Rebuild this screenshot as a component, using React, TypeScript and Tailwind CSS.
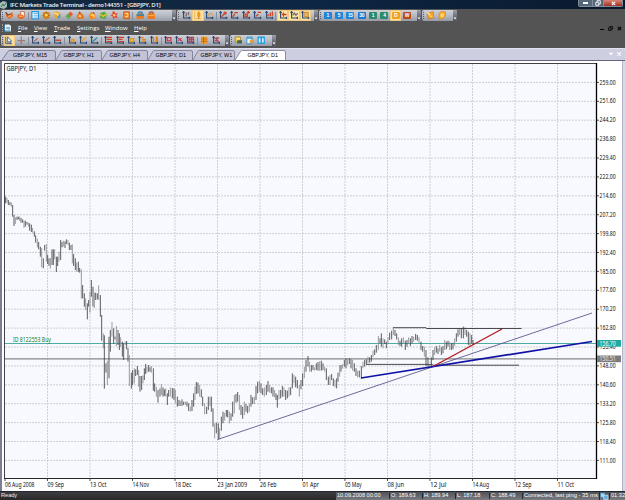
import { Fragment, type ReactNode } from "react";

type Bar = [number, number, number];

// x, high, low in thirds of a pixel
const autumn: Bar[] = [
  [17,20,40],[21,24,38],[25,30,45],[30,36,46],[34,38,50],[38,45,80],[42,75,108],[46,82,102],[51,80,90],[55,80,88],
  [59,80,92],[63,84,98],[68,88,98],[72,92,114],[76,92,110],[81,96,104],[85,98,110],[89,100,122],[94,104,126],[98,114,128],
  [103,124,140],[107,136,158],[112,146,172],[116,156,178],[121,170,200],[125,174,232],[130,205,235],[134,165,182],[139,162,215],
  [143,195,222],[147,205,228],[151,204,236],[156,178,225],[160,178,225],[164,178,208],[169,200,246],[173,200,228],[177,185,215],
  [182,150,210],[186,156,172],[190,152,170],[195,154,174],[199,148,162],[204,150,165],[208,158,180],[213,165,180],[217,163,220],
  [221,192,228],[226,205,240],[230,218,245],[235,215,245],[239,234,248],[244,238,326],[248,285,325],[253,310,350],[257,325,360],
  [262,340,388],[266,330,350],[270,305,368],[274,270,320],[279,290,350],[283,308,354],[287,308,330],[292,310,328],[296,286,330],
  [301,315,380],[305,375,452],[310,430,475],[313,436,596],[318,520,548],[322,512,585],[327,440,565],[331,420,485],[336,396,440],
  [341,415,462],[345,440,448],[349,408,468],[354,420,465],[358,430,480],[362,442,470],[367,455,500],[371,460,510],[376,455,465],
  [380,453,478],[384,475,515],[388,495,588],[394,548,596],[398,540,585],[403,535,580],[407,538,558],[412,528,555],[416,540,590],
  [420,558,605],[425,558,600],[429,556,580],[433,535,570],[437,522,552],[441,530,548],[446,525,545],
];

const winter: Bar[] = [
  [0,202,215],[4,198,218],[10,205,272],[14,250,275],[19,260,290],[24,270,308],[30,265,290],[34,252,285],[39,262,290],[43,268,288],
  [47,265,290],[52,280,315],[56,270,290],[61,262,290],[67,264,295],[72,265,300],[76,270,310],[82,290,320],[87,300,318],[91,303,318],
  [96,298,318],[101,305,315],[106,305,315],[111,305,320],[116,310,333],[121,320,335],[126,300,333],[131,280,320],[135,260,300],
  [139,246,282],[144,248,280],[149,255,290],[154,268,292],[158,290,318],[164,310,343],[170,320,342],[175,290,330],[180,290,318],
  [184,290,335],[189,325,380],[194,370,415],[199,368,400],[205,370,418],[209,385,418],[214,350,392],[219,335,370],[224,338,362],
  [229,330,350],[233,330,352],[238,335,370],[243,340,362],[248,305,350],[253,285,340],[258,282,308],[263,276,305],[268,285,330],
  [273,315,345],[278,320,356],[283,305,345],[288,312,335],[293,318,340],[298,310,335],[303,285,320],[308,292,312],[313,290,312],
  [318,258,300],[323,245,280],[328,243,275],[333,250,280],[338,265,285],[343,262,290],[349,255,285],[354,243,275],[359,255,278],
  [364,262,280],[369,262,290],[374,270,292],[378,280,300],[382,285,323],[387,270,298],[392,270,295],[397,258,290],[402,262,290],
  [407,270,300],[412,272,295],[417,262,290],[422,262,285],[427,220,265],[432,225,250],[437,230,262],[442,240,265],[448,255,290],
  [453,240,268],[458,220,258],[463,200,235],[468,180,215],[474,168,200],[479,185,215],[484,195,215],[489,195,210],[494,202,212],
  [499,190,210],[504,186,212],[509,184,212],[514,182,212],[519,190,210],[524,200,215],[529,205,240],[535,230,255],[540,225,255],
  [545,222,240],[550,235,258],[555,240,262],[560,235,265],[564,218,245],[569,195,230],
];

const summer: Bar[] = [
  [3,195,215],[8,192,206],[13,180,200],[18,175,205],[23,178,195],[28,175,192],[33,178,205],[38,180,212],[43,190,215],[48,205,228],
  [53,212,232],[58,212,232],[64,198,236],[69,185,205],[74,180,200],[79,178,192],[84,170,190],[89,172,188],[94,165,185],[99,152,172],
  [104,148,165],[109,135,158],[115,108,150],[120,115,130],[124,100,140],[129,115,145],[134,118,132],[139,125,145],[144,112,130],
  [149,98,120],[155,92,118],[160,84,105],[165,90,108],[170,100,118],[175,112,135],[180,122,138],[185,115,140],[190,112,130],
  [196,122,150],[201,120,140],[206,112,132],[211,115,138],[216,108,130],[221,110,125],[227,102,120],[232,105,122],[237,112,130],
  [243,125,150],[248,138,155],[253,140,170],[258,150,198],[264,172,200],[269,195,200],[274,172,198],[279,150,180],[284,142,165],
  [289,138,158],[294,145,162],[299,135,155],[304,142,165],[309,138,160],[314,120,150],[319,125,148],[324,122,140],[329,125,150],
  [334,130,150],[339,128,148],[344,115,138],[349,100,125],[354,88,110],[359,85,105],[364,85,115],[370,80,115],[375,82,105],
  [380,90,110],[385,95,135],[390,100,138],[395,105,130],[399,120,135],
];

const dates = [
  "06 Aug 2008", "09 Sep", "13 Oct", "14 Nov", "18 Dec", "23 Jan 2009", "26 Feb",
  "01 Apr", "05 May", "08 Jun", "12 Jul", "14 Aug", "12 Sep", "11 Oct",
];

const prices = Array.from({ length: 21 }, (_, i) => (259 - i * 7.4).toFixed(2));

const Ico = ({ children }: { children: ReactNode }) => (
  <svg viewBox="0 0 8 8" className="size-[8.5px] shrink-0" fill="none">{children}</svg>
);

// Chart tool: a pair of axes with a coloured mark over them
const Axes = ({ d, c = "#d0401e", fill = "none" }: { d: string; c?: string; fill?: string }) => (
  <Ico>
    <path d="M1.5 .5v6h6M.5 1.8l1-1.3 1 1.3M6.5 5.5l1 1-1 1" stroke="#27476f" strokeWidth="1" />
    <path d={d} stroke={c} strokeWidth="1.2" fill={fill} />
  </Ico>
);

const Num = ({ n, c }: { n: string; c: string }) => (
  <span className={`flex h-[7px] w-2 items-center justify-center rounded-[1px] font-bold text-[5px] leading-none tracking-[-0.3px] text-white ${c}`}>{n}</span>
);

const Slot = ({ on, children }: { on?: boolean; children: ReactNode }) => (
  <div className={`flex h-[11px] w-[11.35px] shrink-0 items-center justify-center ${on ? "border border-[#eec884] bg-[#ffe3a1]" : ""}`}>
    {children}
  </div>
);

const Sep = () => <div className="mx-[1px] h-2 w-[0.7px] shrink-0 bg-[#878d9a]" />;

const ToolBar = ({ w, children }: { w: string; children: ReactNode }) => (
  <div className={`flex h-[11px] shrink-0 items-center overflow-hidden rounded-[2px] bg-linear-to-b from-[#cdd0d7] via-[#b7bbc4] to-[#959aa6] ${w}`}>
    <div className="mx-[1px] h-[7px] shrink-0 border-l border-dotted border-[#565c6b]" />
    {children}
    <div className="ml-auto flex h-full w-[4px] shrink-0 items-end justify-center bg-linear-to-b from-[#9ca0aa] to-[#4c4f57] pb-[1px]">
      <svg viewBox="0 0 4 4" className="size-[4px]"><path d="M.5 1.5h3L2 3.5z" fill="#fff" /></svg>
    </div>
  </div>
);

const mainIcons: (ReactNode | null)[] = [
  <Ico><path d="M.5 1l3 2 3.5-2 .5 4-3.5 2.5L1 5z" fill="#ee6818" /><path d="M.5 1l2.5 3 2-1" stroke="#4c5364" /><path d="M3 5l2.5-.5" stroke="#ffd57c" /></Ico>,
  <Ico><path d="M3 .5h4v5H4z" fill="#eef0f4" stroke="#b34e20" strokeWidth=".6" /><path d="M.5 3.5L3 3l3 1v3L3 7.5.5 6z" fill="#ee6414" /><path d="M2 5h3" stroke="#ffd188" /></Ico>,
  null,
  <Ico><path d="M.8.5h6.4v7H.8z" fill="#f5fbff" stroke="#2794da" strokeWidth="1.2" /><path d="M2.5 2.3h4M2.5 4h4M2.5 5.7h4" stroke="#55a8d6" strokeWidth=".8" /></Ico>,
  <Ico><circle cx="4" cy="4" r="3.3" fill="#e98a14" /><path d="M4 .2v7.6M.2 4h7.6M1.3 1.3l5.4 5.4M6.7 1.3L1.3 6.7" stroke="#965014" strokeWidth=".6" /><circle cx="4" cy="4" r="1.4" fill="#ffd85a" /></Ico>,
  <Ico><path d="M1 1l3-.5 3 2v4L4 7.5 1.5 6z" fill="#f2a31c" /><path d="M1.5 2l3 1v3" stroke="#fff0b6" /><path d="M4 5l3-2v3L4.5 7.5z" fill="#469cd2" /></Ico>,
  <Ico><path d="M.5 5l4.7-4.5L7.5 3 3.5 7.5z" fill="#e65b34" /><path d="M.5 5l2.5-2.3 2.3 2.8-1.8 2z" fill="#50b54a" /></Ico>,
  <Ico><path d="M3.5.5L7 4l.5 3L2 7.5.5 5z" fill="#ed7018" /><path d="M2 5l2-2 1 3" fill="#ffe28c" /><path d="M3 .8l1 2" stroke="#8f4931" /></Ico>,
  <Ico><path d="M3 .7L7 3.5V7L2 7.5.5 5z" fill="#f08b18" /><path d="M2.5 4l3-.5v2.5" stroke="#ffe6a2" /><path d="M5 1l1 2" stroke="#9c5731" /></Ico>,
  <Ico><path d="M1 2l4-1.5L7.5 3 6 7.5 1 6.5z" fill="#54ac3d" /><path d="M1.2 3L4 5l3-2" stroke="#f5bc34" strokeWidth="1.3" /></Ico>,
  <Ico><path d="M4 .3l1 2 2.5-.4L6 4l1.2 2.7L4.5 6 3 7.7 2.5 5 .3 4l2.2-1L2.2.8z" fill="#e74526" /><circle cx="4" cy="4" r="1.1" fill="#ffd080" /></Ico>,
  <Ico><path d="M1.5.7H7v6.6H1.5z" fill="#f08324" stroke="#b84b18" strokeWidth=".6" /><path d="M3 2.3h2.5v3H3" stroke="#ffe5ad" strokeWidth=".9" /></Ico>,
  null,
  <Ico><path d="M.5 3L4 1.5 7.5 3v4.3h-7z" fill="#eb791b" /><path d="M2 2.5c0-2.2 4-2.2 4 0" stroke="#2881bb" /><path d="M.5 3h7v1.6h-7z" fill="#3d86ae" /></Ico>,
  <Ico><path d="M.5 3L4 1.5 7.5 3v4L4 7.7.5 7z" fill="#ed7a1c" /><path d="M2 2.5c0-2.2 4-2.2 4 0" stroke="#9b5b35" /><path d="M1 4.2h6" stroke="#ffbf68" strokeWidth=".7" /></Ico>,
];

const chartIcons: ([ReactNode, boolean?] | null)[] = [
  [<Axes d="M4 1.5v3.7M3.2 4h1M6 1v3M6 2h1" c="#8c6d68" />],
  [<Ico><path d="M.7.7v6.5h6.5" stroke="#d9a640" strokeWidth=".7" /><path d="M4.5.3v7" stroke="#b15b14" strokeWidth=".8" /><path d="M3 1.5h3v4H3z" fill="#f69612" /></Ico>, true],
  [<Axes d="M2.5 5L4 2.5 6 2l1.4 2" c="#d7a366" />],
  null,
  [<Axes d="M2.5 5.5l2-2.5M4 2h3.5M5.7.3v3.5" />],
  [<Axes d="M2.5 5.5l2-2.5M4 1.5h3.5" />],
  [<Axes d="M3 3h2v2H3zM4.5 1.3H7.5M6 0v2.7" />],
  [<Axes d="M3 5l2-2M4.5 1.3h3" />],
  [<Axes d="M3 5V3M5 5V1.5M7 .5v4" />],
  null,
  [<Axes d="M4.2 1.5v4M2.5 3.3h4.5" />, true],
  [<Axes d="M2.5 4l1.6-2 1.5 2 1.7-2" c="#66707e" />, true],
  [<Axes d="M2.8 1.3h4v4h-4z" c="#c79345" fill="#e7b56a" />, true],
];

const drawIcons: ([ReactNode, boolean?] | null)[] = [
  [<Ico><path d="M.8.8v6.5h6" stroke="#465c78" strokeWidth="1" /><path d="M2.5.8v5.5l1.3-1.1.9 2 .9-.5-.9-1.8h1.6z" fill="#fff" stroke="#24456e" strokeWidth=".7" /></Ico>, true],
  [<Ico><path d="M4 .4v7.2M.4 4.3h7.2" stroke="#5c6672" strokeWidth=".7" /><path d="M3 4.3h2M4 3.3v2" stroke="#e06a34" /></Ico>],
  null,
  [<Axes d="M3 5l3.5-3" c="#b5685b" />],
  [<Axes d="M2 5.5L7 1.5" c="#b5685b" />],
  [<Axes d="M2 4h5.5" c="#c44a2c" />],
  null,
  [<Axes d="M3 5.2l.8-2 2 .7-.8 1.3z" c="#e79616" fill="#ffcd3c" />],
  [<Axes d="M2.3 5l4.5-4" c="#f0a010" />],
  [<Axes d="M2.3 5.5l4.5-4" c="#378894" />],
  null,
  [<Axes d="M2.5 1.2h5M2.5 3.2h5M2.5 5.2h5" />],
  [<Axes d="M2.5 1.2h5M2.5 3.2h3.5M2.5 5.2h5" />],
  [<Axes d="M3 2.5h3.3v2.7H3z" c="#e0981c" fill="#e6c065" />],
  [<Axes d="M2.3 1.5h3M4 3.5h3.5M4 5h3.5" c="#e08218" />],
  [<Axes d="M3.3 1v5M6 1h1v4H6z" c="#e08218" />],
  null,
  [<Axes d="M3 1.5h3.5v3H3z" c="#c83a4a" />],
  [<Axes d="M3 2l3.5 3M3 4.5L6 2" c="#c83a4a" />],
  [<Axes d="M3 1.2h4v4H3zM3 3.2h4M5 1.2v4" c="#a64557" />],
  null,
  [<Ico><path d="M1 .7h6v6.6H1z" fill="#f19b28" /><path d="M1 2.8h6M1 5h6M3.3.7v6.6" stroke="#b8601a" strokeWidth=".7" /></Ico>],
  [<Axes d="M2.5 1.5l4 4M2.5 5l4-3.5M4.5 1v4.5" c="#af4d5b" />],
];

const menu = [
  ["F", "ile", "w-4"], ["V", "iew", "w-[20px]"], ["T", "rade", "w-[23px]"],
  ["S", "ettings", "w-[28px]"], ["W", "indow", "w-[29px]"], ["H", "elp", "w-4"],
];

const tabs = ["GBPJPY, M15", "GBPJPY, H1", "GBPJPY, H4", "GBPJPY, D1", "GBPJPY, W1"];

const Series = ({ x, y, bars }: { x: number; y: number; bars: Bar[] }) => (
  <g transform={`translate(${x} ${y}) scale(.33333)`}>
    {bars.map(([bx, hi, lo], i) => (
      <path key={i} d={`M${bx} ${hi}V${lo}`} stroke={i % 3 === 1 ? "#8a8a8e" : "#424246"} strokeWidth="2.6" />
    ))}
  </g>
);

const Chart = () => (
  <svg viewBox="3 61 619 430" className="block h-[430px] w-[619px] font-['Noto_Sans',sans-serif] text-[6.2px]">
    <rect x="4.5" y="63.5" width="592" height="415" fill="#f8f9fe" />
    <g stroke="#c3c4cd" strokeWidth=".8" strokeDasharray="2 1">
      {prices.map((p, i) => <path key={p} d={`M5 ${82.4 + i * 18.9}H596`} />)}
      {dates.slice(1).map((d, i) => <path key={d} d={`M${47.5 + i * 42.5} 64V478`} />)}
    </g>
    <path d="M5 343.5H596" stroke="#4cada4" />
    <path d="M5 358.8H596" stroke="#86868a" strokeWidth="1.3" />
    <Series x={0} y={190} bars={autumn} />
    <Series x={150} y={300} bars={winter} />
    <Series x={340} y={300} bars={summer} />
    <path d="M393 327.7h33l.5.8h95M366 364.4h66l1 .8h86" fill="none" stroke="#38383c" strokeWidth=".9" />
    <path d="M217.5 439.5L592 313" stroke="#5c5a91" strokeWidth=".9" />
    <path d="M361 378L592 341.5" stroke="#1010a4" strokeWidth="1.7" />
    <path d="M433 366.5L502 329" stroke="#b31c1f" strokeWidth="1.4" />
    <path d="M4.5 478.5V63.5H596" fill="none" stroke="#45424c" />
    <path d="M4 478.5h593" stroke="#28282c" />
    <path d="M596.5 63v416" stroke="#000" strokeWidth="1.3" />
    <text x="6.5" y="71.2" textLength="30" lengthAdjust="spacingAndGlyphs" fill="#111">GBPJPY, D1</text>
    <text x="13" y="342.3" textLength="38" lengthAdjust="spacingAndGlyphs" fill="#128426">ID 8122553 Buy</text>
    {prices.map((p, i) => (
      <g key={p}>
        <path d={`M597 ${82.4 + i * 18.9}h2`} stroke="#222" strokeWidth=".8" />
        <text x="599.6" y={84.5 + i * 18.9} textLength="16" lengthAdjust="spacingAndGlyphs" fill="#111">{p}</text>
      </g>
    ))}
    {dates.map((d, i) => (
      <g key={d}>
        <path d={`M${5 + i * 42.5} 479v2`} stroke="#222" strokeWidth=".8" />
        <text x={5 + i * 42.5} y="486.7" textLength={d.length > 6 ? 29.5 : d.length * 2.75} lengthAdjust="spacingAndGlyphs" fill="#111">{d}</text>
      </g>
    ))}
    <rect x="597" y="340" width="24" height="6.7" fill="#20a99f" />
    <rect x="597" y="355.5" width="24" height="6.7" fill="#7c7c7c" />
    <text x="599.6" y="345.6" textLength="16" lengthAdjust="spacingAndGlyphs" fill="#fff">156.70</text>
    <text x="599.6" y="361.1" textLength="16" lengthAdjust="spacingAndGlyphs" fill="#e8e8e8">150.51</text>
  </svg>
);

export default function App() {
  return (
    <div className="flex h-[500px] w-[625px] flex-col overflow-hidden bg-[#545454] font-['Liberation_Sans',sans-serif] text-[6px] leading-none whitespace-nowrap">
      <div className="flex h-[9px] shrink-0 bg-linear-to-r from-[#14283b] via-[#0c2644] to-[#0a1a2c]">
        <svg viewBox="0 0 8 8" className="mt-[1px] size-2">
          <path d="M0 2l3-2 4 1v5L4 8 0 7z" fill="#a6b8b2" /><path d="M1 6l2-3 1 2 3-4" stroke="#2e7b64" fill="none" />
        </svg>
        <span className="mt-[1px] ml-[2px] font-['Open_Sans',sans-serif] text-[6.1px] leading-[7px] font-semibold tracking-[-0.28px] text-[#f2f5f8]">
          IFC Markets Trade Terminal - demo144351 - [GBPJPY, D1]
        </span>
        <div className="mr-[2px] ml-auto flex h-[7px] w-[45px] overflow-hidden rounded-b-[2px] border border-t-0 border-[#7d8b9b]">
          <div className="flex w-[13px] items-center justify-center bg-[#56677b]"><div className="h-[1.5px] w-[5px] bg-white" /></div>
          <div className="flex w-[12px] items-center justify-center border-x border-[#8290a0] bg-[#56677b]">
            <svg viewBox="0 0 6 6" className="size-[6px]" fill="none" stroke="#fff"><path d="M2 2V.7h3.3V4H4M.8 2.3h3v3h-3z" strokeWidth=".9" /></svg>
          </div>
          <div className="flex flex-1 items-center justify-center bg-linear-to-b from-[#d88578] to-[#a32c1d]">
            <svg viewBox="0 0 6 6" className="size-[5px]" stroke="#fff" strokeWidth="1.4"><path d="M1 1l4 4M5 1L1 5" /></svg>
          </div>
        </div>
      </div>

      <div className="mt-[1px] flex h-[11px] shrink-0 gap-[1px] pl-[1px]">
        <ToolBar w="w-[175px]">
          {mainIcons.map((ic, i) => <Fragment key={i}>{ic ? <Slot>{ic}</Slot> : <Sep />}</Fragment>)}
        </ToolBar>
        <ToolBar w="w-[141px]">
          <div className="w-[1px] shrink-0" />
          {chartIcons.map((it, i) => <Fragment key={i}>{it ? <Slot on={it[1]}>{it[0]}</Slot> : <Sep />}</Fragment>)}
        </ToolBar>
        <ToolBar w="w-[102px]">
          <Slot><Num n="1" c="bg-[#1e86d8]" /></Slot>
          <Slot><Num n="5" c="bg-[#1e86d8]" /></Slot>
          <Slot><Num n="15" c="bg-[#1e86d8]" /></Slot>
          <Slot><Num n="30" c="bg-[#1e78cc]" /></Slot>
          <Slot><Num n="1" c="bg-[#2a8a69]" /></Slot>
          <Slot><Num n="4" c="bg-[#2a8a69]" /></Slot>
          <Slot on><Num n="D" c="bg-[#f2a31a]" /></Slot>
          <Slot><Num n="W" c="bg-[#b9491b]" /></Slot>
        </ToolBar>
        <ToolBar w="w-[35px]">
          <Slot><Ico><path d="M1 1.5h3l3-1v6l-5 1z" fill="#f6a31f" stroke="#d96b14" strokeWidth=".5" /><path d="M1 1l3 3M4 5h2" stroke="#fff0b8" /></Ico></Slot>
          <Slot><Ico><path d="M2.5.7H7l-.5 4.5L4 7.5H1V2.5z" fill="#f8b12a" stroke="#d97a14" strokeWidth=".6" /><path d="M3 5V3h2v2z" stroke="#fff0b8" strokeWidth=".8" /></Ico></Slot>
        </ToolBar>
      </div>

      <div className="flex h-[14px] shrink-0 items-center pl-[2px] font-['Open_Sans',sans-serif] text-[6px] font-medium text-white">
        <div className="h-2 border-l border-dotted border-[#999]" />
        <svg viewBox="0 0 8 8" className="mr-[6px] ml-[1px] size-2">
          <path d="M1 .5h4.5L7 2v5.5H1z" fill="#e8f0f6" /><path d="M.5 1v6h6M3 5V3M5 5.5V3" stroke="#337ca8" fill="none" />
        </svg>
        {menu.map(([k, rest, w]) => (
          <span key={k} className={w}><span className="underline decoration-[0.5px] underline-offset-1">{k}</span>{rest}</span>
        ))}
        <div className="mr-[3px] ml-auto flex items-center gap-[4px] text-black">
          <div className="mt-[3px] h-[1.2px] w-[4px] bg-black" />
          <svg viewBox="0 0 6 6" className="size-[5px]" fill="none" stroke="#000"><path d="M2 2V.7h3.3V4H4M.8 2.3h3v3h-3z" /></svg>
          <svg viewBox="0 0 6 6" className="size-[5px]" stroke="#000" strokeWidth="1.3"><path d="M1 1l4 4M5 1L1 5" /></svg>
        </div>
      </div>

      <div className="flex h-[11px] shrink-0 gap-[1px] pl-[1px]">
        <ToolBar w="w-[228px]">
          {drawIcons.map((it, i) => <Fragment key={i}>{it ? <Slot on={it[1]}>{it[0]}</Slot> : <Sep />}</Fragment>)}
        </ToolBar>
        <ToolBar w="w-[46px]">
          <Slot><Ico><path d="M1 .8h5v5H1z" fill="#f7ca42" stroke="#8b7127" strokeWidth=".6" /><path d="M3 4h4.5v3H3z" fill="#3e6952" /><path d="M2.5 2.5h3" stroke="#fff4bb" /></Ico></Slot>
          <Slot><Ico><path d="M.8 1h5v6.3h-5z" fill="#e9f5fb" stroke="#2a8bc3" strokeWidth=".8" /><path d="M1 2h5" stroke="#2a9ad8" /><path d="M3.5 3.5h4v3h-4z" fill="#e49e3c" /></Ico></Slot>
          <Slot><Ico><path d="M.5.5h7v7h-7z" fill="#2c9ee0" /><path d="M2.5 2v4M5.5 2v4" stroke="#eaf8ff" strokeWidth="1.4" /></Ico></Slot>
        </ToolBar>
      </div>

      <div className="mt-[2px] flex h-[13px] shrink-0 items-end border-t border-[#e3e3ef] border-b border-b-[#67647a] bg-[#cecee1] pl-[2px] text-[5.4px] text-black">
        {tabs.map((t, i) => (
          <div key={t} className={`relative h-[10px] shrink-0 ${i === 0 ? "w-[54px]" : i === 4 ? "w-[42px]" : i === 3 ? "w-[45px]" : "w-[46px]"}`}>
            <svg viewBox="0 0 46 10" preserveAspectRatio="none" className="absolute inset-0 h-full w-full" fill="none">
              <path d="M0 10L5 1.5Q5.5.5 7 .5H44Q45.5.5 45.5 2V10" stroke="#76748a" strokeWidth=".8" fill="#c3c3d8" />
            </svg>
            <span className={`relative block pt-[2.5px] ${i === 0 ? "pl-[11px]" : "pl-[7.5px]"}`}>{t}</span>
          </div>
        ))}
        <div className="relative h-[10px] w-[51px] shrink-0">
          <svg viewBox="0 0 51 10" className="absolute inset-0 h-full w-full">
            <path d="M0 10L5.5 1.5Q6 .5 7.5 .5H49Q50.5.5 50.5 2V10" stroke="#76748a" strokeWidth=".8" fill="#fff" />
          </svg>
          <span className="relative block pt-[2.5px] pl-[12.5px]">GBPJPY, D1</span>
        </div>
        <div className="mr-[4px] mb-[4px] ml-auto flex gap-[4px]">
          <svg viewBox="0 0 4 4" className="size-[4px]"><path d="M0 .8h4L2 3.6z" fill="#fff" /></svg>
          <svg viewBox="0 0 4 4" className="size-[4px]" stroke="#fff" strokeWidth="1.1"><path d="M.3.3l3.4 3.4M3.7.3L.3 3.7" /></svg>
        </div>
      </div>

      <div className="flex h-[430px] shrink-0 border-l-2 border-[#7c7f94] bg-white pl-[1px]">
        <Chart />
        <div className="flex-1 border-l border-[#b4b3c8] bg-[#d9d9e8]" />
      </div>

      <div className="flex h-[9px] shrink-0 items-center border-t border-[#23262f] bg-linear-to-b from-[#3c3d41] to-[#292929] text-[#eee]">
        <span className="pl-[1px] text-[5.6px]">Ready</span>
        <div className="ml-auto flex h-full items-center bg-linear-to-b from-[#50525a] to-[#7b7c80] text-[5.6px] text-white">
          <span className="w-[53px] pl-[1px]">10.09.2008 00:00</span>
          <span className="w-[33px] border-l border-[#26272b] pl-[1px]">O: 189.63</span>
          <span className="w-[33px] border-l border-[#26272b] pl-[1px]">H: 189.94</span>
          <span className="w-[34px] border-l border-[#26272b] pl-[1px]">L: 187.18</span>
          <span className="w-[33px] border-l border-[#26272b] pl-[1px]">C: 188.49</span>
          <span className="w-[77px] border-l border-[#26272b] pl-[1px] text-[5.8px]">Connected, last ping - 35 ms</span>
          <span className="flex w-[10px] justify-center border-l border-[#26272b]">
            <Ico><path d="M.5 1h4v4h-4z" fill="#a7d9f4" stroke="#3b82b4" strokeWidth=".6" /><path d="M3.5 3h4v4h-4z" fill="#60adda" stroke="#dceefa" strokeWidth=".6" /></Ico>
          </span>
          <span className="w-[16px] border-l border-[#26272b] pl-[1px]">01:32</span>
        </div>
      </div>
    </div>
  );
}
